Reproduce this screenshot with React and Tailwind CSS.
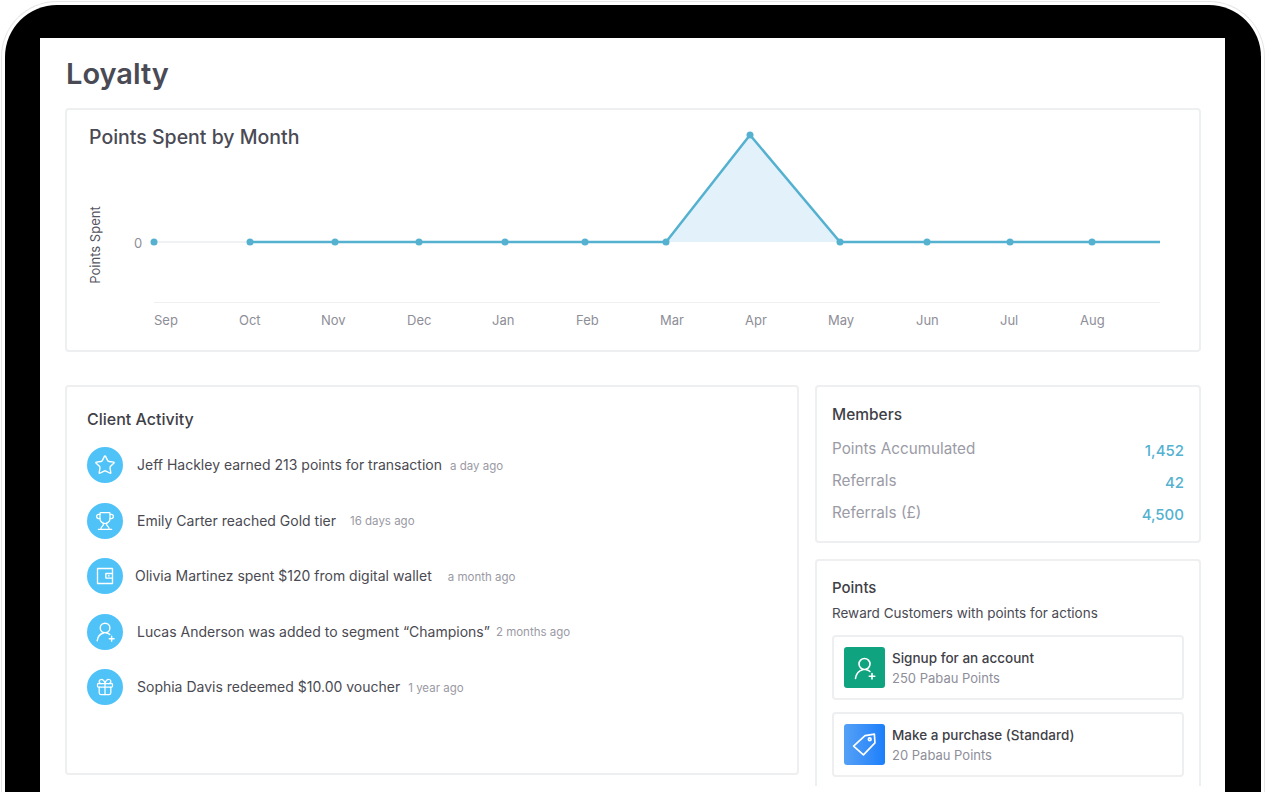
import React from "react";
import { Star, Trophy, Gift } from "lucide-react";

const months = [
  ["Sep", 154], ["Oct", 239], ["Nov", 321], ["Dec", 407], ["Jan", 492], ["Feb", 576],
  ["Mar", 660], ["Apr", 745], ["May", 828], ["Jun", 916], ["Jul", 1000], ["Aug", 1080],
];

const points = [
  [250, 242], [335, 242], [419, 242], [505, 242], [585, 242], [666, 242],
  [750, 135], [840, 242], [927, 242], [1010, 242], [1092, 242],
];

const WalletIcon = ({ className }) => (
  <svg viewBox="0 0 24 24" fill="none" stroke="currentColor" strokeWidth="1.6" className={className}>
    <path d="M3 3h18v18H3z" strokeLinejoin="round" />
    <path d="M21 9h-8v5.500h8" strokeLinejoin="round" />
    <path d="M15.500 11.800h2" />
  </svg>
);

const UserPlusIcon = ({ className }) => (
  <svg viewBox="0 0 24 24" fill="none" stroke="currentColor" strokeWidth="1.6" strokeLinecap="round" className={className}>
    <circle cx="11.500" cy="8" r="5.500" />
    <path d="M2.500 22.500c.6-4.600 3.400-7.800 7.200-8.800" />
    <path d="M13.300 13.700c1.500.3 2.700.9 3.600 1.800" />
    <path d="M19 17.500v5.500M16.300 20.200h5.500" />
  </svg>
);

const TagIcon = ({ className }) => (
  <svg viewBox="0 0 24 24" fill="none" stroke="currentColor" strokeWidth="1.6" strokeLinejoin="round" className={className}>
    <path d="M1.500 13.500 12.500 3.500l9-1.500.5 8.500L11 22z" />
    <circle cx="17" cy="7" r="1.300" />
  </svg>
);

const activity = [
  { Icon: Star, size: "h-[22px] w-[22px]", text: "Jeff Hackley earned 213 points for transaction", time: "a day ago", ml: "ml-[14px]", gap: "ml-[8px]" },
  { Icon: Trophy, size: "h-[20px] w-[20px]", text: "Emily Carter reached Gold tier", time: "16 days ago", ml: "ml-[14px]", gap: "ml-[14px]" },
  { Icon: WalletIcon, size: "h-[20px] w-[20px]", text: "Olivia Martinez spent $120 from digital wallet", time: "a month ago", ml: "ml-[12px]", gap: "ml-[16px]" },
  { Icon: UserPlusIcon, size: "h-[21px] w-[21px]", text: "Lucas Anderson was added to segment “Champions”", time: "2 months ago", ml: "ml-[14px]", gap: "ml-[6px]" },
  { Icon: Gift, size: "h-[20px] w-[20px]", text: "Sophia Davis redeemed $10.00 voucher", time: "1 year ago", ml: "ml-[14px]", gap: "ml-[8px]" },
];

const members = [
  ["Points Accumulated", "1,452"],
  ["Referrals", "42"],
  ["Referrals (£)", "4,500"],
];

const PointsChart = () => (
  <svg viewBox="67 150 1131 200" width="1131" height="200" className="block overflow-visible">
    <line x1="154" y1="242" x2="250" y2="242" stroke="#f1f2f3" strokeWidth="2" />
    <line x1="154" y1="302.500" x2="1160" y2="302.500" stroke="#eeeff1" strokeWidth="1" />
    <path d="M666 242 750 135 840 242Z" fill="#e3f2fa" />
    <path d="M250 242H666L750 135 840 242H1160" fill="none" stroke="#54b1d0" strokeWidth="2.500" />
    <circle cx="154" cy="242" r="3.500" fill="#54b1d0" />
    {points.map(([x, y]) => (
      <circle key={x} cx={x} cy={y} r="3.500" fill="#54b1d0" />
    ))}
    <text x="134" y="247.500" fontSize="13" fill="#8e8e98">0</text>
    <text transform="translate(100 245) rotate(-90)" textAnchor="middle" fontSize="13" fill="#55555f">Points Spent</text>
    {months.map(([m, x]) => (
      <text key={m} x={x} y="325" fontSize="13" fill="#8e8e98">{m}</text>
    ))}
  </svg>
);

const App = () => {
  return (
    <div className="h-[792px] w-full overflow-hidden bg-white pt-px px-px font-[family-name:Inter,sans-serif]">
      <div className="h-full rounded-t-[56px] border border-b-0 border-[#e6e6e8] pt-[3px] pl-[3px] pr-[3px]">
        <div className="h-full rounded-t-[52px] bg-black pt-[33px] pl-[35px] pr-[36px]">
          <div className="h-full overflow-hidden bg-white pl-[25px] pr-[24px]">
            <h1 className="pt-[18px] pl-px text-[29px] leading-[36px] font-semibold text-[#4a4a55]">Loyalty</h1>

            <div className="mt-[16px] h-[244px] rounded border-2 border-[#eeeff1]">
              <h2 className="pt-[15px] pl-[22px] text-[19.500px] leading-[25px] font-medium text-[#4a4a55]">Points Spent by Month</h2>
              <PointsChart />
            </div>

            <div className="mt-[33px] flex gap-[16px]">
              <div className="h-[390px] w-[734px] rounded border-2 border-[#eeeff1] pt-[20px] pl-[20px]">
                <h2 className="text-[16px] leading-[24px] font-medium text-[#3f3f48]">Client Activity</h2>
                <ul className="mt-[16px] flex flex-col gap-[19.500px]">
                  {activity.map(({ Icon, size, text, time, ml, gap }) => (
                    <li key={text} className="flex h-[36px] items-center">
                      <span className="flex h-[36px] w-[36px] shrink-0 items-center justify-center rounded-full bg-[#4fc3f7] text-white">
                        <Icon className={size} strokeWidth={1.5} />
                      </span>
                      <span className={`${ml} pb-px text-[14px] text-[#4a4a52]`}>{text}</span>
                      <span className={`${gap} pt-[3px] text-[11.500px] text-[#9a9aa4]`}>{time}</span>
                    </li>
                  ))}
                </ul>
              </div>

              <div className="flex h-[401px] w-[386px] flex-col gap-[16px]">
                <div className="h-[158px] shrink-0 rounded border-2 border-[#eeeff1] px-[15px] pt-[17px]">
                  <h2 className="text-[15.500px] leading-[22px] font-medium text-[#3f3f48]">Members</h2>
                  <dl className="mt-[7px] flex flex-col">
                    {members.map(([label, value]) => (
                      <div key={label} className="flex h-[32px] items-center justify-between">
                        <dt className="text-[15.250px] text-[#9b9ba6]">{label}</dt>
                        <dd className="pt-[4px] text-[15px] font-medium text-[#54b1d0]">{value}</dd>
                      </div>
                    ))}
                  </dl>
                </div>

                <div className="flex-1 rounded-t border-2 border-b-0 border-[#eeeff1] px-[15px] pt-[16px]">
                  <h2 className="text-[15px] leading-[22px] font-medium text-[#3f3f48]">Points</h2>
                  <p className="mt-[4px] text-[13.500px] leading-[20px] text-[#4a4a52]">Reward Customers with points for actions</p>
                  <div className="mt-[12px] flex flex-col gap-[12px]">
                    <div className="flex h-[65px] items-center gap-[7px] rounded border-2 border-[#eeeff1] pl-[10px]">
                      <span className="flex h-[41px] w-[41px] items-center justify-center rounded-[3px] bg-[#10a37f] text-white">
                        <UserPlusIcon className="h-[24px] w-[24px]" />
                      </span>
                      <div>
                        <div className="text-[13.500px] leading-[20px] font-medium text-[#3f3f48]">Signup for an account</div>
                        <div className="text-[13px] leading-[20px] text-[#8e8e9a]">250 Pabau Points</div>
                      </div>
                    </div>
                    <div className="flex h-[65px] items-center gap-[7px] rounded border-2 border-[#eeeff1] pl-[10px]">
                      <span className="flex h-[41px] w-[41px] items-center justify-center rounded-[3px] bg-gradient-to-r from-[#54a0f5] to-[#1a7ffb] text-white">
                        <TagIcon className="h-[25px] w-[25px]" />
                      </span>
                      <div>
                        <div className="text-[13.500px] leading-[20px] font-medium text-[#3f3f48]">Make a purchase (Standard)</div>
                        <div className="text-[13px] leading-[20px] text-[#8e8e9a]">20 Pabau Points</div>
                      </div>
                    </div>
                  </div>
                </div>
              </div>
            </div>
          </div>
        </div>
      </div>
    </div>
  );
};

export default App;
